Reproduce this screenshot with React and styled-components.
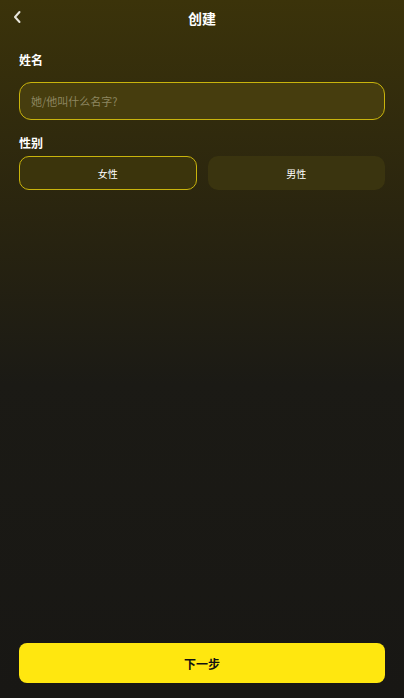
import React, { useState } from "react";
import styled, { createGlobalStyle } from "styled-components";

const GlobalStyle = createGlobalStyle`
  html, body {
    margin: 0;
    padding: 0;
    background: #181714;
  }
  * { box-sizing: border-box; }
`;

const Page = styled.div`
  width: 404px;
  height: 698px;
  display: flex;
  flex-direction: column;
  background: linear-gradient(180deg, #3b330a 0%, #2a250f 30%, #1b1a15 55%, #181714 100%);
  font-family: "Noto Sans CJK SC", "Noto Sans", sans-serif;
  color: #fff;
`;

const Header = styled.div`
  position: relative;
  height: 36px;
  display: flex;
  align-items: center;
  justify-content: center;
`;

const BackButton = styled.button`
  position: absolute;
  left: 8px;
  top: 8px;
  width: 18px;
  height: 18px;
  padding: 0;
  border: 0;
  background: none;
  display: flex;
  align-items: center;
  justify-content: center;
`;

const Title = styled.h1`
  margin: 0;
  font-size: 14px;
  font-weight: 700;
  line-height: 20px;
  margin-top: -1px;
`;

const Form = styled.div`
  flex: 1;
  padding: 14px 19px 0;
  display: flex;
  flex-direction: column;
`;

const Label = styled.div`
  font-size: 12px;
  font-weight: 700;
  line-height: 20px;
  margin-bottom: ${(p) => p.$gap || 0}px;
`;

const NameInput = styled.input`
  width: 100%;
  height: 38px;
  border: 1.5px solid #c9b40c;
  border-radius: 12px;
  background: #463d0e;
  color: #fff;
  padding: 0 11px;
  font-family: inherit;
  font-size: 11px;
  outline: none;
  margin-bottom: 13px;
  &::placeholder {
    color: #8d8660;
  }
`;

const GenderRow = styled.div`
  display: grid;
  grid-template-columns: 1fr 1fr;
  gap: 11px;
  margin-top: 2px;
`;

const GenderOption = styled.button`
  height: 34px;
  border-radius: 10px;
  border: 1.5px solid ${(p) => (p.$active ? "#c9b40c" : "transparent")};
  background: ${(p) => (p.$active ? "#3b340c" : "#3a340f")};
  color: #fff;
  font-family: inherit;
  font-size: 10px;
  cursor: pointer;
`;

const Footer = styled.div`
  padding: 0 19px 15px;
`;

const NextButton = styled.button`
  width: 100%;
  height: 40px;
  border: 0;
  border-radius: 8px;
  background: #ffe70f;
  color: #111;
  font-family: inherit;
  font-size: 12px;
  font-weight: 700;
  cursor: pointer;
`;

export default function App() {
  const [gender, setGender] = useState("female");
  return (
    <>
      <GlobalStyle />
      <Page>
        <Header>
          <BackButton aria-label="back">
            <svg width="10" height="14" viewBox="0 0 10 14" fill="none">
              <path d="M7.5 2 L3 7 L7.5 12" stroke="#e8e6dc" strokeWidth="2" strokeLinecap="round" strokeLinejoin="round" />
            </svg>
          </BackButton>
          <Title>创建</Title>
        </Header>
        <Form>
          <Label $gap={12}>姓名</Label>
          <NameInput placeholder="她/他叫什么名字?" />
          <Label $gap={1}>性别</Label>
          <GenderRow>
            <GenderOption $active={gender === "female"} onClick={() => setGender("female")}>女性</GenderOption>
            <GenderOption $active={gender === "male"} onClick={() => setGender("male")}>男性</GenderOption>
          </GenderRow>
        </Form>
        <Footer>
          <NextButton>下一步</NextButton>
        </Footer>
      </Page>
    </>
  );
}
